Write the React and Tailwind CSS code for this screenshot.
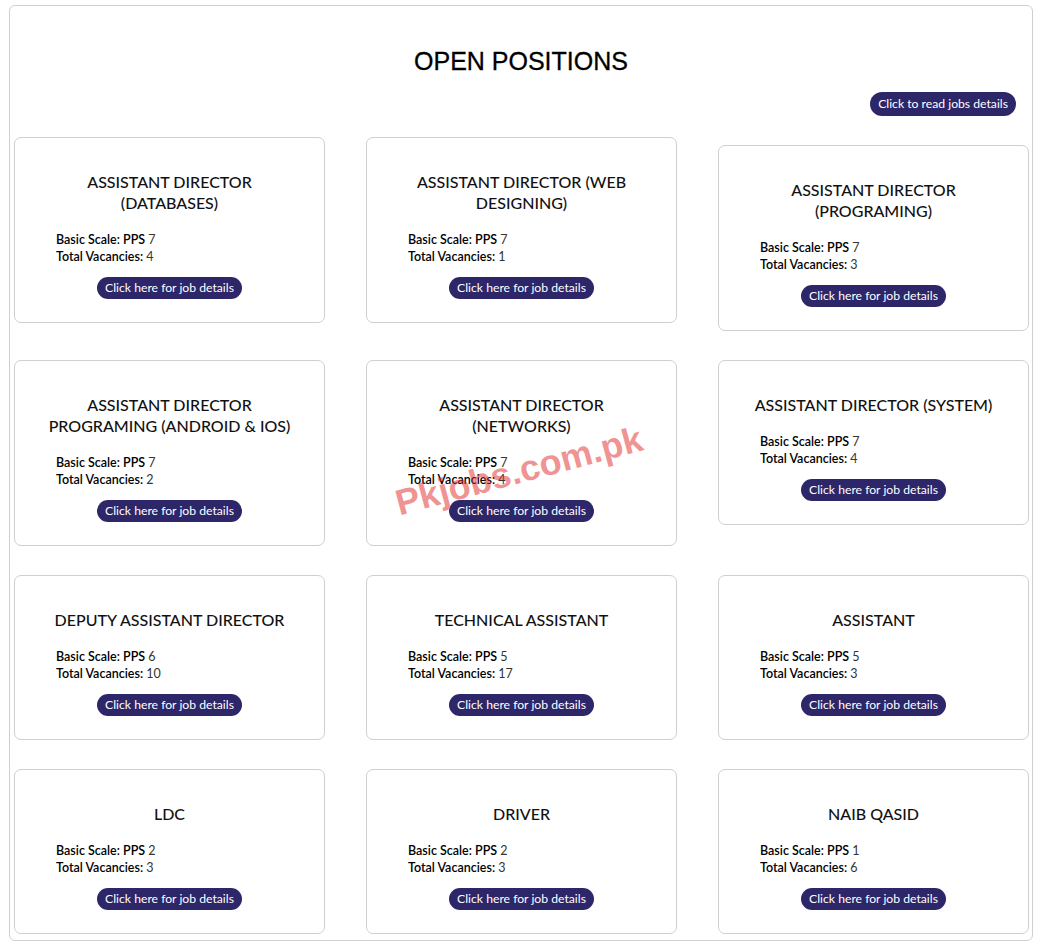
const jobs = [
  { title: ['ASSISTANT DIRECTOR', '(DATABASES)'], scale: 7, vacancies: 4 },
  { title: ['ASSISTANT DIRECTOR (WEB', 'DESIGNING)'], scale: 7, vacancies: 1 },
  { title: ['ASSISTANT DIRECTOR', '(PROGRAMING)'], scale: 7, vacancies: 3, shifted: true },
  { title: ['ASSISTANT DIRECTOR', 'PROGRAMING (ANDROID & IOS)'], scale: 7, vacancies: 2 },
  { title: ['ASSISTANT DIRECTOR', '(NETWORKS)'], scale: 7, vacancies: 4 },
  { title: ['ASSISTANT DIRECTOR (SYSTEM)'], scale: 7, vacancies: 4 },
  { title: ['DEPUTY ASSISTANT DIRECTOR'], scale: 6, vacancies: 10 },
  { title: ['TECHNICAL ASSISTANT'], scale: 5, vacancies: 17 },
  { title: ['ASSISTANT'], scale: 5, vacancies: 3 },
  { title: ['LDC'], scale: 2, vacancies: 3 },
  { title: ['DRIVER'], scale: 2, vacancies: 3 },
  { title: ['NAIB QASID'], scale: 1, vacancies: 6 },
]

const PillButton = ({ children }) => (
  <button className="rounded-full bg-[#2d2668] text-white text-[12.2px] leading-[22px] h-[22px] px-[8px] whitespace-nowrap">
    {children}
  </button>
)

const JobCard = ({ job }) => (
  <div
    className={
      'border border-[#cfcfcf] rounded-[7px] bg-white pt-[33px] pb-[23px] ' +
      (job.shifted ? 'mt-[8px]' : '')
    }
  >
    <h3 className="text-center text-[16px] leading-[21px] font-medium text-[#111] whitespace-nowrap">
      {job.title.map((line, i) => (
        <div key={i}>{line}</div>
      ))}
    </h3>
    <div className="mt-[18px] pl-[41px] text-[12.5px] leading-[17px]">
      <div>
        <span className="font-semibold text-black">Basic Scale: PPS </span>
        <span className="text-[#333]">{job.scale}</span>
      </div>
      <div>
        <span className="font-semibold text-black">Total Vacancies: </span>
        <span className="text-[#333]">{job.vacancies}</span>
      </div>
    </div>
    <div className="mt-[12px] flex justify-center">
      <PillButton>Click here for job details</PillButton>
    </div>
  </div>
)

export default function App() {
  return (
    <div className="bg-white min-h-screen pl-[9px] pt-[5px] font-['Lato','Noto_Sans',sans-serif]">
      <div className="relative w-[1024px] h-[936px] border border-[#cfcfcf] rounded-[6px] bg-white">
        <h2 className="pt-[41px] text-center text-[25px] leading-[29px] text-black [-webkit-text-stroke:0.3px_black] font-['Liberation_Sans',Arial,sans-serif]">
          OPEN POSITIONS
        </h2>
        <div className="mt-[16px] flex justify-end pr-[16px]">
          <button className="rounded-full bg-[#2d2668] text-white text-[12.2px] h-[24px] leading-[24px] px-[8px]">
            Click to read jobs details
          </button>
        </div>
        <div className="mt-[21px] px-[4px] grid grid-cols-[repeat(3,311px)] gap-x-[41px] gap-y-[29px] items-start">
          {jobs.map((job, i) => (
            <JobCard key={i} job={job} />
          ))}
        </div>
        <div className="pointer-events-none absolute left-[509px] top-[465px] -translate-x-1/2 -translate-y-1/2 -rotate-[15deg] font-['Liberation_Sans',Arial,sans-serif] font-bold text-[36px] text-[rgba(224,40,40,0.5)] whitespace-nowrap">
          Pkjobs.com.pk
        </div>
      </div>
    </div>
  )
}
